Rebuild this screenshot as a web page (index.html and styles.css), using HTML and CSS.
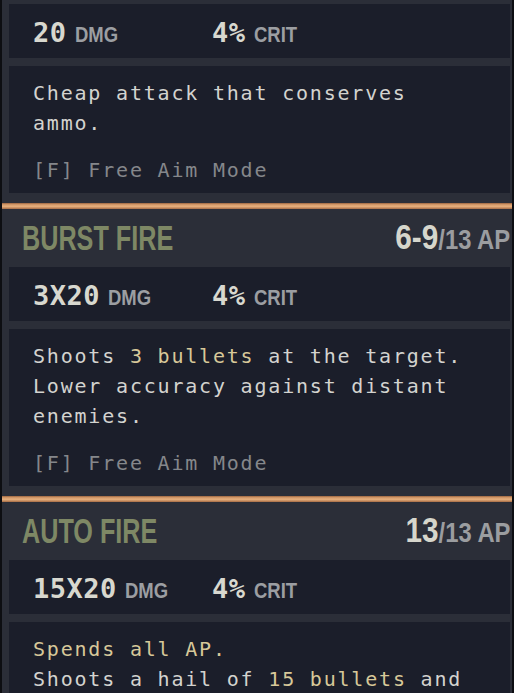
FILE: index.html
```html
<!DOCTYPE html>
<html lang="en">
<head>
    <meta charset="UTF-8">
    <meta name="viewport" content="width=device-width, initial-scale=1.0">
    <title>Fire Modes</title>
    <link rel="stylesheet" href="styles.css">
</head>
<body>
    <div class="panel">

        <!-- Single shot (header is above the visible area) -->
        <section class="mode">
            <div class="stats">
                <span class="stat dmg"><b>20</b><span class="unit">DMG</span></span>
                <span class="stat"><b>4%</b><span class="unit">CRIT</span></span>
            </div>
            <div class="desc">
                <p>Cheap attack that conserves ammo.</p>
                <p class="hint">[F] Free Aim Mode</p>
            </div>
        </section>

        <hr class="divider">

        <section class="mode">
            <div class="mode-head">
                <h2 class="title">BURST FIRE</h2>
                <div class="cost"><b>6-9</b><span>/13 AP</span></div>
            </div>
            <div class="stats">
                <span class="stat dmg"><b>3X20</b><span class="unit">DMG</span></span>
                <span class="stat"><b>4%</b><span class="unit">CRIT</span></span>
            </div>
            <div class="desc">
                <p>Shoots <em>3 bullets</em> at the target. Lower accuracy against distant enemies.</p>
                <p class="hint">[F] Free Aim Mode</p>
            </div>
        </section>

        <hr class="divider">

        <section class="mode">
            <div class="mode-head">
                <h2 class="title">AUTO FIRE</h2>
                <div class="cost"><b>13</b><span>/13 AP</span></div>
            </div>
            <div class="stats">
                <span class="stat dmg"><b>15X20</b><span class="unit">DMG</span></span>
                <span class="stat"><b>4%</b><span class="unit">CRIT</span></span>
            </div>
            <div class="desc">
                <p><em>Spends all AP.</em><br>Shoots a hail of <em>15 bullets</em> and</p>
            </div>
        </section>

    </div>
</body>
</html>
```

FILE: styles.css
```css
body {
    margin: 0;
    padding: 0;
    background-color: #0d0e12;
    font-family: "DejaVu Sans Mono", "Liberation Mono", monospace;
}

.panel {
    margin: 0 2px;
    padding-top: 4px;
    min-height: 693px;
    box-sizing: border-box;
    background-color: #2b2e38;
}

.mode {
    padding: 0 2px 10px 7px;
}

/* header row: name + AP cost */
.mode-head {
    height: 58px;
    display: flex;
    align-items: center;
    justify-content: space-between;
    padding-left: 13px;
}

.title,
.cost,
.stat {
    font-family: "Liberation Sans", Arial, sans-serif;
    font-weight: bold;
}

/* no condensed face installed, so squeeze the display type */
.title {
    display: inline-block;
    margin: 0;
    font-size: 35px;
    line-height: 40px;
    color: #7e8865;
    transform: scaleX(0.72);
    transform-origin: left center;
}

.cost {
    display: flex;
    align-items: baseline;
    color: #d6d6cc;
    font-size: 35px;
    line-height: 40px;
    transform: scaleX(0.85);
    transform-origin: right center;
}

    .cost span {
        font-size: 28px;
        color: #9b9da0;
    }

/* damage / crit line */
.stats {
    height: 54px;
    display: flex;
    align-items: center;
    padding-left: 24px;
    margin-bottom: 8px;
    background-color: #1b1e2a;
    color: #9c9ea2;
}

.stat {
    display: flex;
    align-items: baseline;
    padding-top: 3px;
}

    .stat b {
        font-family: "DejaVu Sans Mono", monospace;
        font-size: 27px;
        letter-spacing: 0.5px;
        color: #d8d8cf;
    }

.unit {
    display: inline-block;
    margin-left: 8px;
    font-size: 22px;
    transform: scaleX(0.84);
    transform-origin: left center;
}

.stat.dmg {
    min-width: 179px;
}

/* description box */
.desc {
    padding: 12px 36px 8px 24px;
    background-color: #1b1e2a;
    font-size: 20px;
    line-height: 30px;
    letter-spacing: 1.8px;
    color: #d3d3cf;
}

    .desc p {
        margin: 0;
    }

    .desc em {
        font-style: normal;
        color: #d7c899;
    }

    .desc .hint {
        margin-top: 17px;
        color: #85878b;
    }

.divider {
    height: 6px;
    margin: 0;
    border: none;
    background: linear-gradient(#9a6440, #d99f6e 30%, #e4ad7b 60%, #a56b45);
}
```
